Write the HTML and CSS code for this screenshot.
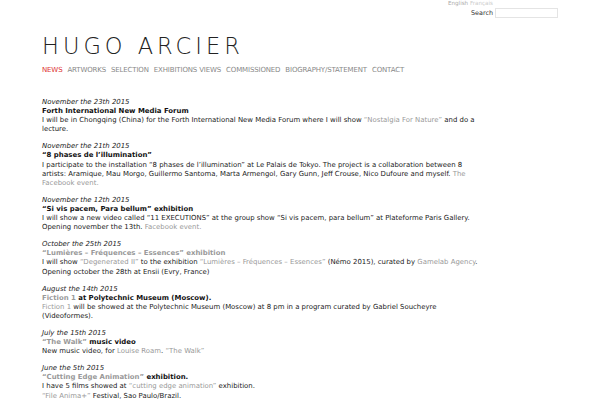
FILE: index.html
```html
<!DOCTYPE html>
<html>
<head>
<meta charset="utf-8">
<link rel="stylesheet" href="styles.css">
</head>
<body>
<div class="top">
  <div class="langs"><a class="lang cur">English</a> <a class="lang">Français</a></div>
  <div class="search"><span class="slabel">Search</span><span class="sbox"></span></div>
</div>
<div class="page">
  <h1 class="logo">HUGO ARCIER</h1>
  <nav class="nav">
    <a class="active">NEWS</a>
    <a>ARTWORKS</a>
    <a>SELECTION</a>
    <a>EXHIBITIONS VIEWS</a>
    <a>COMMISSIONED</a>
    <a>BIOGRAPHY/STATEMENT</a>
    <a>CONTACT</a>
  </nav>
  <div class="news">
    <div class="entry">
      <div class="date">November the 23th 2015</div>
      <div class="title">Forth International New Media Forum</div>
      <p>I will be in Chongqing (China) for the Forth International New Media Forum where I will show <a>“Nostalgia For Nature”</a> and do a lecture.</p>
    </div>
    <div class="entry">
      <div class="date">November the 21th 2015</div>
      <div class="title">“8 phases de l’illumination”</div>
      <p>I participate to the installation “8 phases de l’illumination” at Le Palais de Tokyo. The project is a collaboration between 8 artists: Aramique, Mau Morgo, Guillermo Santoma, Marta Armengol, Gary Gunn, Jeff Crouse, Nico Dufoure and myself. <a>The Facebook event.</a></p>
    </div>
    <div class="entry">
      <div class="date">November the 12th 2015</div>
      <div class="title">“Si vis pacem, Para bellum” exhibition</div>
      <p>I will show a new video called “11 EXECUTIONS” at the group show “Si vis pacem, para bellum” at Plateforme Paris Gallery. Opening november the 13th. <a>Facebook event.</a></p>
    </div>
    <div class="entry">
      <div class="date">October the 25th 2015</div>
      <div class="title"><a>“Lumières – Fréquences – Essences” exhibition</a></div>
      <p>I will show <a>“Degenerated II”</a> to the exhibition <a>“Lumières – Fréquences – Essences”</a> (Némo 2015), curated by <a>Gamelab Agency</a>.<br>Opening october the 28th at Ensii (Evry, France)</p>
    </div>
    <div class="entry">
      <div class="date">August the 14th 2015</div>
      <div class="title"><a>Fiction 1</a> at Polytechnic Museum (Moscow).</div>
      <p><a>Fiction 1</a> will be showed at the Polytechnic Museum (Moscow) at 8 pm in a program curated by Gabriel Soucheyre (Videoformes).</p>
    </div>
    <div class="entry">
      <div class="date">July the 15th 2015</div>
      <div class="title"><a>“The Walk”</a> music video</div>
      <p>New music video, for <a>Louise Roam</a>. <a>“The Walk”</a></p>
    </div>
    <div class="entry">
      <div class="date">June the 5th 2015</div>
      <div class="title"><a>“Cutting Edge Animation”</a> exhibition.</div>
      <p>I have 5 films showed at <a>“cutting edge animation”</a> exhibition.<br><a>“File Anima+”</a> Festival, Sao Paulo/Brazil.</p>
    </div>
  </div>
</div>
</body>
</html>
```
FILE: styles.css
```css
html, body {
  margin: 0;
  padding: 0;
  background: #fff;
}
body {
  font-family: "DejaVu Sans", Verdana, sans-serif;
  font-size: 6.93px;
  color: #222;
  width: 600px;
  height: 400px;
  overflow: hidden;
}
a {
  color: #999;
  text-decoration: none;
}
.top {
  display: flex;
  flex-direction: column;
  align-items: flex-end;
  padding-right: 42px;
  height: 18px;
}
.langs {
  font-size: 5.6px;
  line-height: 7px;
  margin-right: 65px;
}
.lang { color: #ccc; }
.lang.cur { color: #aaa; }
.search {
  display: flex;
  align-items: center;
  gap: 2px;
  font-size: 6.4px;
  color: #333;
  margin-top: 1px;
}
.sbox {
  display: block;
  width: 61px;
  height: 8px;
  border: 1px solid #e4e4e4;
}
.page {
  padding-left: 42px;
  width: 440px;
}
.logo {
  margin: 17px 0 0 0;
  font-family: "DejaVu Sans", sans-serif;
  font-weight: 200;
  font-size: 22.5px;
  line-height: 22px;
  letter-spacing: 4px;
  color: #222;
}
.nav {
  display: flex;
  gap: 5px;
  margin-top: 9px;
  font-size: 7px;
  line-height: 9px;
  letter-spacing: -0.15px;
}
.nav a { color: #888; }
.nav a.active { color: #d33; }
.news {
  margin-top: 23px;
}
.entry {
  margin-bottom: 8px;
  line-height: 9.1px;
}
.date {
  font-style: italic;
  color: #222;
}
.title {
  font-weight: bold;
  color: #111;
}
.entry p {
  margin: 0;
}
```
